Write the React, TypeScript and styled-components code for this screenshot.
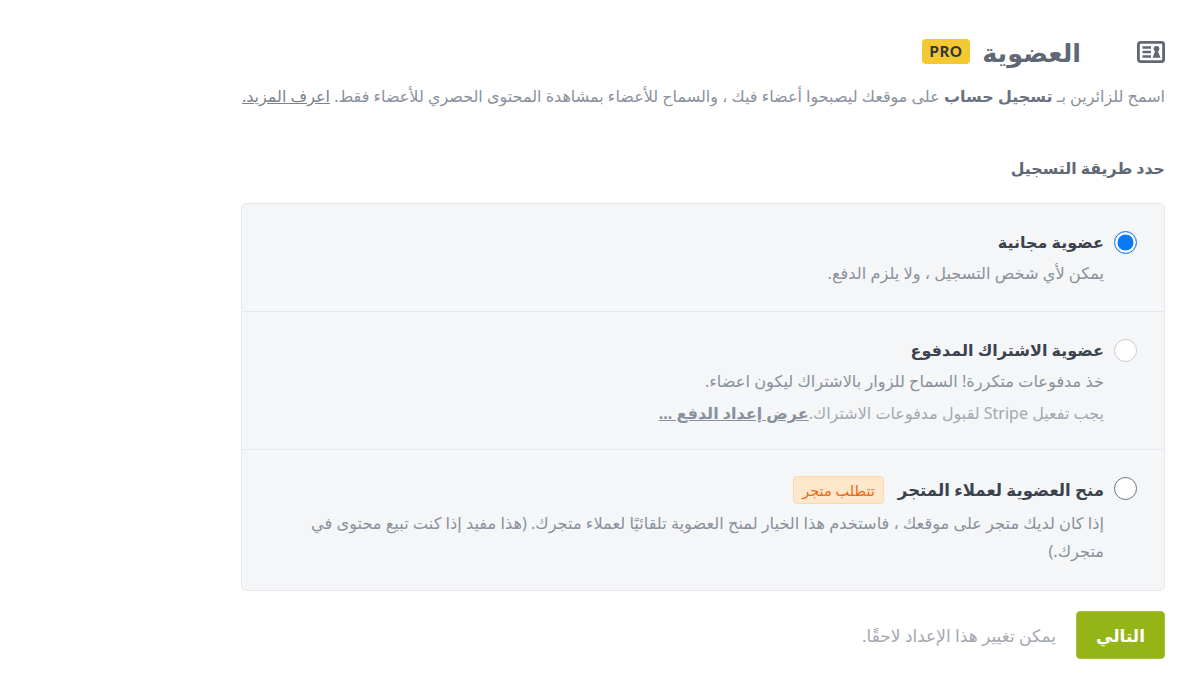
import { createGlobalStyle } from "styled-components";
import styled from "styled-components";

const GlobalStyle = createGlobalStyle`
  html, body {
    margin: 0;
    padding: 0;
    background: #fff;
  }
  body {
    font-family: "Noto Sans", "DejaVu Sans", sans-serif;
    color: #6b7280;
  }
`;

function MemberIcon() {
  return (
    <svg width="28" height="22" viewBox="0 0 28 22" fill="none">
      <rect x="1.4" y="1.4" width="25.2" height="19.2" rx="2" stroke="#5f6874" strokeWidth="2.8" />
      <path d="M5.5 6.5h8.5M5.5 11h8.5M5.5 15.5h8.5" stroke="#5f6874" strokeWidth="2.4" />
      <circle cx="19.5" cy="7.8" r="2.8" fill="#5f6874" />
      <path d="M18.2 10h2.6l2.7 6.8h-8z" fill="#5f6874" />
    </svg>
  );
}

export default function App() {
  return (
    <Page dir="rtl">
      <GlobalStyle />
      <Header>
        <MemberIcon />
        <Title>العضوية</Title>
        <ProBadge dir="ltr">PRO</ProBadge>
      </Header>
      <Description>
        اسمح للزائرين بـ <strong>تسجيل حساب</strong> على موقعك ليصبحوا أعضاء فيك ، والسماح للأعضاء بمشاهدة المحتوى الحصري للأعضاء فقط. <LearnMore href="#">اعرف المزيد.</LearnMore>
      </Description>
      <SectionLabel>حدد طريقة التسجيل</SectionLabel>
      <Card>
        <Option $height={107}>
          <Radio $state="checked" />
          <OptionBody>
            <OptionTitle>عضوية مجانية</OptionTitle>
            <OptionText>يمكن لأي شخص التسجيل ، ولا يلزم الدفع.</OptionText>
          </OptionBody>
        </Option>
        <Option $height={138}>
          <Radio $state="disabled" />
          <OptionBody>
            <OptionTitle>عضوية الاشتراك المدفوع</OptionTitle>
            <OptionText>خذ مدفوعات متكررة! السماح للزوار بالاشتراك ليكون اعضاء.</OptionText>
            <OptionHint>
              يجب تفعيل Stripe لقبول مدفوعات الاشتراك.<HintLink href="#">عرض إعداد الدفع ...</HintLink>
            </OptionHint>
          </OptionBody>
        </Option>
        <Option $height={141}>
          <Radio $state="idle" />
          <OptionBody>
            <TitleRow>
              <OptionTitle $size={16.6}>منح العضوية لعملاء المتجر</OptionTitle>
              <StoreBadge>تتطلب متجر</StoreBadge>
            </TitleRow>
            <OptionText>
              إذا كان لديك متجر على موقعك ، فاستخدم هذا الخيار لمنح العضوية تلقائيًا لعملاء متجرك. (هذا مفيد إذا كنت تبيع محتوى في متجرك.)
            </OptionText>
          </OptionBody>
        </Option>
      </Card>
      <Footer>
        <NextButton>التالي</NextButton>
        <FooterNote>يمكن تغيير هذا الإعداد لاحقًا.</FooterNote>
      </Footer>
    </Page>
  );
}

const Page = styled.main`
  width: 924px;
  margin: 0 35px 0 241px;
  padding-top: 39px;
`;

const Header = styled.header`
  display: flex;
  align-items: center;
  height: 25px;

  svg {
    margin-left: 56px;
  }
`;

const Title = styled.h1`
  margin: 0 0 0 12px;
  font-size: 25.5px;
  font-weight: 700;
  color: #5f6874;
`;

const ProBadge = styled.span`
  display: flex;
  align-items: center;
  justify-content: center;
  width: 48px;
  height: 25px;
  border-radius: 4px;
  background: #f5c832;
  color: #2d3440;
  font-family: "Lato", sans-serif;
  font-size: 14.5px;
  font-weight: 900;
  letter-spacing: 1px;
`;

const Description = styled.p`
  margin: 20px 0 0;
  font-size: 16px;
  line-height: 24px;
  color: #8a919c;
  white-space: nowrap;

  strong {
    color: #6b7280;
    font-weight: 700;
  }
`;

const LearnMore = styled.a`
  color: #7c838e;
  text-decoration: underline;
`;

const SectionLabel = styled.h2`
  margin: 48px 0 0;
  font-size: 15.8px;
  line-height: 24px;
  font-weight: 700;
  color: #5f6874;
`;

const Card = styled.section`
  margin-top: 23px;
  border: 1px solid #e6e8eb;
  border-radius: 5px;
  background: #f5f6f8;
`;

const Option = styled.div<{ $height: number }>`
  display: flex;
  align-items: flex-start;
  gap: 10px;
  box-sizing: border-box;
  height: ${(p) => p.$height}px;
  padding: 26px 27px 0 40px;

  & + & {
    border-top: 1px solid #e6e8eb;
  }
`;

const Radio = styled.span<{ $state: "checked" | "idle" | "disabled" }>`
  flex: none;
  box-sizing: border-box;
  width: 23px;
  height: 23px;
  margin-top: 1px;
  border-radius: 50%;
  background: #fff;
  border: ${(p) =>
    p.$state === "checked"
      ? "1.5px solid #0b78f5"
      : p.$state === "idle"
        ? "1.5px solid #6b7280"
        : "1.5px solid #c9ccd1"};
  box-shadow: ${(p) => (p.$state === "checked" ? "inset 0 0 0 2.5px #fff, inset 0 0 0 12px #0b78f5" : "none")};
`;

const OptionBody = styled.div`
  flex: 1;
  min-width: 0;
`;

const TitleRow = styled.div`
  display: flex;
  align-items: center;
  gap: 14px;
  margin-bottom: 4px;
`;

const OptionTitle = styled.div<{ $size?: number }>`
  font-size: ${(p) => p.$size ?? 16}px;
  line-height: 24px;
  font-weight: 700;
  color: #3c434e;
`;

const OptionText = styled.p`
  margin: 5px 0 0;
  font-size: 16.2px;
  line-height: 28px;
  color: #8a919c;
`;

const OptionHint = styled.p`
  margin: 6px 0 0;
  font-size: 16px;
  line-height: 24px;
  color: #a3a8b0;
`;

const HintLink = styled.a`
  color: #8a919c;
  font-weight: 700;
  text-decoration: underline;
`;

const StoreBadge = styled.span`
  display: inline-flex;
  align-items: center;
  height: 26px;
  padding: 0 8px;
  border: 1px solid #fbd9ae;
  border-radius: 4px;
  background: #ffe7cc;
  color: #ea6a12;
  font-size: 14.5px;
`;

const Footer = styled.footer`
  display: flex;
  align-items: center;
  gap: 20px;
  margin-top: 20px;
`;

const NextButton = styled.button`
  width: 89px;
  height: 48px;
  padding: 0;
  border: 1px solid #a3c23a;
  border-radius: 4px;
  background: #95b516;
  color: #fff;
  font-family: inherit;
  font-size: 17px;
  font-weight: 700;
`;

const FooterNote = styled.span`
  font-size: 17px;
  color: #a3a8b0;
`;
